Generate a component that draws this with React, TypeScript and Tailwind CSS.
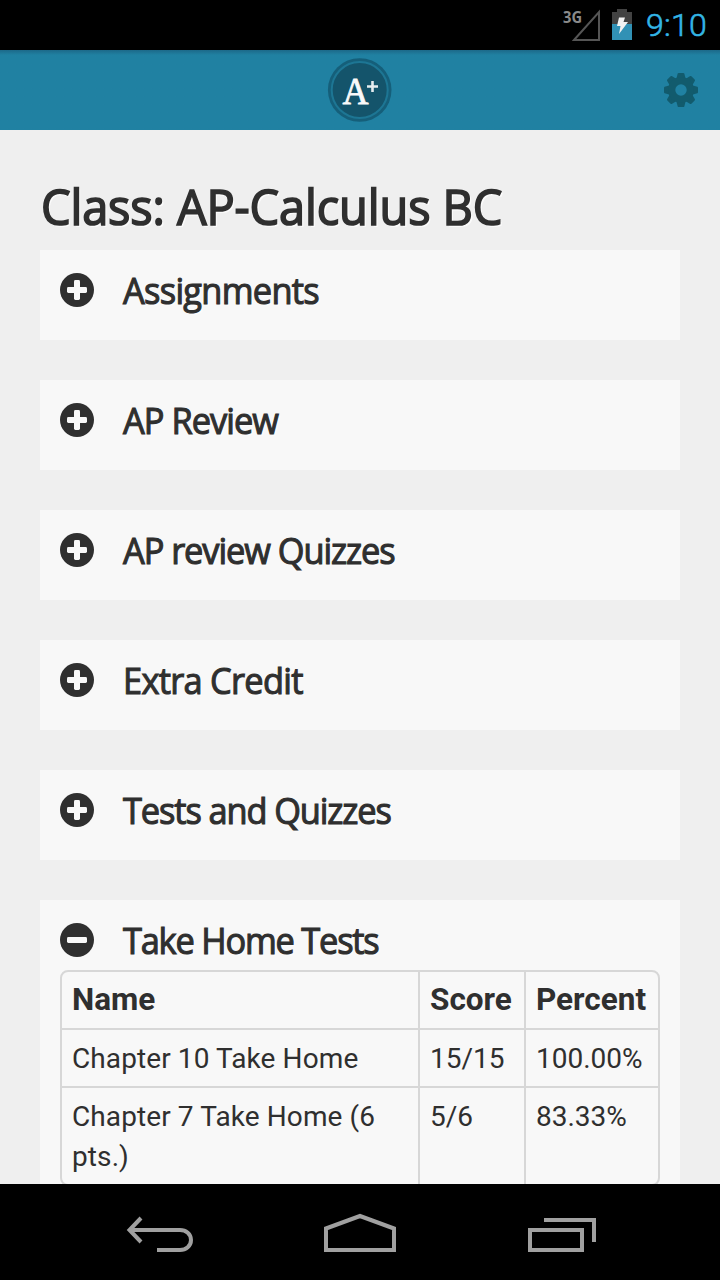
const sections = [
  { title: "Assignments", tracking: "tracking-[-0.78px]" },
  { title: "AP Review", tracking: "tracking-[-1.05px]" },
  { title: "AP review Quizzes", tracking: "tracking-[-1.17px]" },
  { title: "Extra Credit", tracking: "tracking-[-0.8px]" },
  { title: "Tests and Quizzes", tracking: "tracking-[-1.22px]" },
];

const rows = [
  ["Chapter 10 Take Home", "15/15", "100.00%"],
  ["Chapter 7 Take Home (6 pts.)", "5/6", "83.33%"],
];

function StatusBar() {
  return (
    <div className="flex h-[50px] shrink-0 items-center justify-end bg-black pr-[11px]">
      <svg width="80" height="50" viewBox="554 0 80 50" className="mr-[12px]">
        <text x="563" y="23" fill="#8a8a8a" fontSize="16.5" fontWeight="700" fontFamily="'Open Sans', sans-serif" textLength="19" lengthAdjust="spacingAndGlyphs">3G</text>
        <path d="M574 40L599 12V40Z" fill="none" stroke="#555" strokeWidth="2" />
        <path d="M612 12H617V9H627V12H632V24H612Z" fill="#424242" />
        <path d="M612 24H632V40H612Z" fill="#3191b5" />
        <path d="M619 17.5H625L623.5 22H628L619 34L620.5 26H617Z" fill="#f2f2f2" />
      </svg>
      <span className="w-[63px] whitespace-nowrap font-['Roboto'] text-[32px] font-light leading-[50px] tracking-[0.3px] text-[#33b5e5] [-webkit-text-stroke:0.6px_#33b5e5]">9:10</span>
    </div>
  );
}

function Logo() {
  return (
    <svg width="66" height="66" viewBox="0 0 66 66">
      <circle cx="32.7" cy="33" r="31.8" fill="#155f7a" />
      <circle cx="32.7" cy="33" r="28" fill="#14546b" stroke="#1d7694" strokeWidth="2" />
      <text x="15.5" y="46.5" fill="#fafafa" stroke="#fafafa" strokeWidth=".8" fontFamily="'Liberation Serif', serif" fontSize="38" textLength="26" lengthAdjust="spacingAndGlyphs">A</text>
      <path d="M40 29.5H51M45.5 24V35" stroke="#e4ecef" strokeWidth="2.6" />
    </svg>
  );
}

function Gear() {
  return (
    <svg width="36" height="36" viewBox="-18 -18 36 36">
      <g fill="#125b6d">
        {[0, 45, 90, 135, 180, 225, 270, 315].map((a) => (
          <path key={a} d="M-5 -10L-3.3 -16.4Q-3 -17 -2.3 -17H2.3Q3 -17 3.3 -16.4L5 -10Z" transform={`rotate(${a})`} />
        ))}
      </g>
      <circle r="9.3" fill="none" stroke="#125b6d" strokeWidth="7.2" />
    </svg>
  );
}

function ToggleIcon({ open }: { open: boolean }) {
  return (
    <svg width="34" height="34" viewBox="0 0 34 34" className="shrink-0">
      <circle cx="17" cy="17" r="17" fill="#2f2f2f" />
      <rect x="7" y="14" width="20" height="6" rx="1.4" fill="#f8f8f8" />
      {!open && <rect x="14" y="7" width="6" height="20" rx="1.4" fill="#f8f8f8" />}
    </svg>
  );
}

function SectionHeading({ title, tracking, open = false }: { title: string; tracking: string; open?: boolean }) {
  return (
    <h3 className={`flex h-[60px] items-center gap-[28.5px] font-['Open_Sans'] text-[37px] leading-[60px] text-[#2f2f2f] [-webkit-text-stroke:1.1px_#2f2f2f] ${tracking}`}>
      <ToggleIcon open={open} />
      <span className="origin-left scale-x-[0.93] whitespace-nowrap [text-shadow:2px_2px_0_#fbfbfb]">{title}</span>
    </h3>
  );
}

export default function App() {
  return (
    <div className="flex h-[1280px] w-[720px] flex-col overflow-hidden bg-[#efefef] text-[#2f2f2f]">
      <StatusBar />
      <header className="grid h-[80px] shrink-0 grid-cols-[1fr_66px_1fr] items-center bg-linear-to-b from-[#1c6989] via-[#2081a2] via-[5px] to-[#2081a2]">
        <span />
        <Logo />
        <div className="flex justify-end pr-[21px]"><Gear /></div>
      </header>
      <main className="min-h-0 flex-1 overflow-hidden px-[40px] pt-[37px]">
        <h1 className="h-[83px] origin-left scale-x-[0.94] whitespace-nowrap pl-px font-['Open_Sans'] text-[50px] leading-[79px] tracking-[-0.15px] [-webkit-text-stroke:1.7px_#2f2f2f] [text-shadow:2px_2px_0_#fbfbfb]">
          Class: AP-Calculus BC
        </h1>
        <div className="flex flex-col gap-[40px]">
          {sections.map((s) => (
            <section key={s.title} className="h-[90px] bg-[#f8f8f8] px-[20px] pt-[10px]">
              <SectionHeading title={s.title} tracking={s.tracking} />
            </section>
          ))}
          <section className="bg-[#f8f8f8] px-[20px] pt-[10px] pb-[20px]">
            <SectionHeading title="Take Home Tests" tracking="tracking-[-1.32px]" open />
            <div className="overflow-hidden rounded-[8px] border-2 border-[#d7d7d7] font-['Roboto']">
              <div className="grid grid-cols-[356px_106px_1fr] text-[31.5px] font-bold leading-[56px]">
                {["Name", "Score", "Percent"].map((h, i) => (
                  <div key={h} className={i ? "border-l-2 border-[#d7d7d7] pl-[10px]" : "pl-[10px]"}>{h}</div>
                ))}
              </div>
              {rows.map((r) => (
                <div key={r[0]} className="grid grid-cols-[356px_106px_1fr] border-t-2 border-[#d7d7d7] text-[28px] leading-[40px]">
                  {r.map((c, i) => (
                    <div key={c} className={i ? "border-l-2 border-[#d7d7d7] pt-[9px] pb-[7px] pl-[10px]" : "pt-[9px] pr-[20px] pb-[7px] pl-[10px] tracking-[0.1px]"}>{c}</div>
                  ))}
                </div>
              ))}
            </div>
          </section>
        </div>
      </main>
      <nav className="h-[96px] shrink-0 bg-black">
        <svg width="720" height="96" viewBox="0 1184 720 96" fill="none" stroke="#a0a0a0" strokeWidth="4">
          <path d="M130 1230H180C186 1230 191 1234 191 1240S186 1250 180 1250H157M141 1218L129.5 1230L141 1242" />
          <path d="M326 1228.5L360 1216L394 1228.5V1250H326Z" />
          <path d="M530 1230H582V1250H530ZM544 1220H594V1242" />
        </svg>
      </nav>
    </div>
  );
}
